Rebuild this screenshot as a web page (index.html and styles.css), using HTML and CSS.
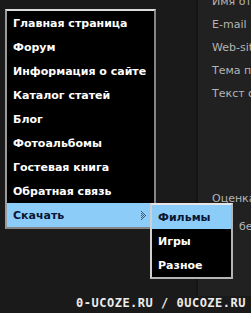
FILE: index.html
```html
<!DOCTYPE html>
<html>
<head>
  <meta charset="UTF-8">
  <title>Меню сайта</title>
  <link rel="stylesheet" href="styles.css">
</head>
<body>
  <div class="page">
    <div class="side">
      <!-- Main site menu -->
      <ul class="menu">
        <li class="menu-item">Главная страница</li>
        <li class="menu-item">Форум</li>
        <li class="menu-item">Информация о сайте</li>
        <li class="menu-item">Каталог статей</li>
        <li class="menu-item">Блог</li>
        <li class="menu-item">Фотоальбомы</li>
        <li class="menu-item">Гостевая книга</li>
        <li class="menu-item">Обратная связь</li>
        <li class="menu-item active">
          Скачать
          <svg class="arrow" width="5" height="9" viewBox="0 0 5 9">
            <rect x="0" y="0" width="1" height="1"/>
            <rect x="0" y="2" width="1" height="1"/>
            <rect x="0" y="4" width="1" height="1"/>
            <rect x="0" y="6" width="1" height="1"/>
            <rect x="0" y="8" width="1" height="1"/>
            <rect x="1" y="1" width="1" height="1"/>
            <rect x="1" y="3" width="1" height="1"/>
            <rect x="1" y="5" width="1" height="1"/>
            <rect x="1" y="7" width="1" height="1"/>
            <rect x="2" y="2" width="1" height="1"/>
            <rect x="2" y="4" width="1" height="1"/>
            <rect x="2" y="6" width="1" height="1"/>
            <rect x="3" y="3" width="1" height="1"/>
            <rect x="3" y="5" width="1" height="1"/>
            <rect x="4" y="4" width="1" height="1"/>
          </svg>
          <ul class="submenu">
            <li class="menu-item active">Фильмы</li>
            <li class="menu-item">Игры</li>
            <li class="menu-item">Разное</li>
          </ul>
        </li>
      </ul>
    </div>

    <div class="content">
      <div class="labels">
        <div class="label">Имя отправителя</div>
        <div class="label">E-mail</div>
        <div class="label">Web-site</div>
        <div class="label">Тема письма</div>
        <div class="label">Текст сообщения</div>
      </div>
      <div class="label rating">Оценка</div>
      <div class="label note">без оценки</div>
    </div>

    <div class="footer">0-UCOZE.RU / 0UCOZE.RU</div>
  </div>
</body>
</html>
```

FILE: styles.css
```css
body {
  margin: 0;
  background: #1a1a1a;
  font-family: "DejaVu Sans", Verdana, sans-serif;
  overflow: hidden;
}

.page {
  width: 251px;
  height: 313px;
  display: grid;
  grid-template-columns: 196px minmax(0, 1fr);
  grid-template-rows: minmax(0, 1fr) auto;
  overflow: hidden;
}

.side {
  padding: 9px 0 0 5px;
  position: relative;
  z-index: 2;
}

.menu {
  list-style: none;
  margin: 0;
  padding: 0;
  width: 147px;
  background: #000;
  border: 2px solid #858585;
  border-top-color: #dcdcdc;
  border-left-color: #9a9a9a;
}

.menu-item {
  position: relative;
  height: 24px;
  line-height: 25px;
  padding-left: 6px;
  font-size: 11px;
  font-weight: bold;
  color: #fff;
  white-space: nowrap;
}

.menu-item.active {
  background: #8bcdf8;
  color: #0b1633;
}

.arrow {
  position: absolute;
  right: 8px;
  top: 8px;
  fill: #4a5a70;
}

.submenu {
  position: absolute;
  top: 0;
  left: calc(100% - 4px);
  list-style: none;
  margin: 0;
  padding: 0;
  width: 79px;
  background: #000;
  border: 2px solid #b5b5b5;
  border-top-color: #e6e6e6;
  border-left-color: #d0d0d0;
}

.content {
  background: #212121;
  border-left: 2px solid #141414;
  padding-left: 14px;
  overflow: hidden;
}

.labels {
  margin-top: -10px;
}

.label {
  height: 23px;
  line-height: 23px;
  font-size: 11px;
  color: #b4b4b4;
  white-space: nowrap;
}

.rating {
  margin-top: 82px;
}

.note {
  margin-top: 5px;
  padding-left: 27px;
}

.footer {
  grid-column: 1 / -1;
  text-align: right;
  padding: 0 5px 3px 0;
  font-family: "DejaVu Sans Mono", monospace;
  font-size: 12px;
  font-weight: bold;
  letter-spacing: 0.5px;
  color: #ececec;
  line-height: 14px;
  background: #1a1a1a;
}
```
